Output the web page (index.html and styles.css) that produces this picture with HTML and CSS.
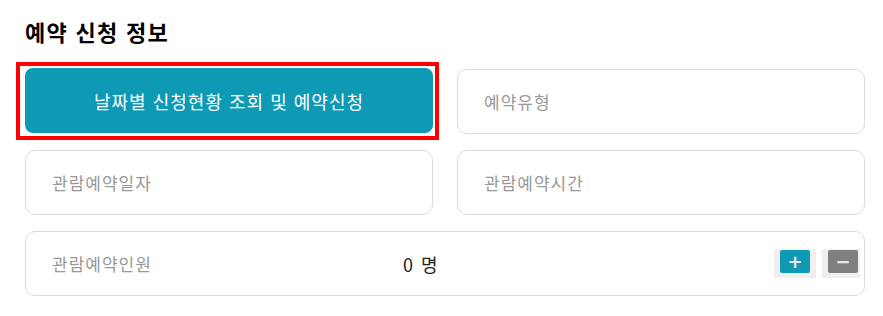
FILE: index.html
```html
<!DOCTYPE html>
<html lang="ko">
<head>
  <meta charset="UTF-8">
  <meta name="viewport" content="width=device-width, initial-scale=1.0">
  <title>예약 신청 정보</title>
  <link rel="stylesheet" href="styles.css">
</head>
<body>

  <div class="reserve">
    <h2 class="reserve-title">예약 신청 정보</h2>

    <div class="reserve-grid">
      <!-- 날짜별 조회 버튼 -->
      <div class="highlight">
        <button class="status-button">날짜별 신청현황 조회 및 예약신청</button>
      </div>
      <div class="field">예약유형</div>
      <div class="field">관람예약일자</div>
      <div class="field">관람예약시간</div>

      <!-- 인원 -->
      <div class="field field-wide">
        <span class="people-label">관람예약인원</span>
        <span class="people-count">0 명</span>
        <div class="counter">
          <button class="counter-btn"><span class="plus">+</span></button>
          <button class="counter-btn last"><span class="minus">−</span></button>
        </div>
      </div>
    </div>
  </div>

</body>
</html>
```

FILE: styles.css
```css
body {
  font-family: "Noto Sans CJK KR", "Noto Sans", sans-serif;
  margin: 0;
  padding: 0;
  background: #fff;
}

.reserve {
  padding: 15px 19px 0 25px;
}

/* 제목 */
.reserve-title {
  font-size: 22px;
  font-weight: bold;
  color: #000;
  letter-spacing: 1.3px;
  margin: 0 0 22px;
  line-height: 32px;
}

.reserve-grid {
  display: grid;
  grid-template-columns: 408px 408px;
  column-gap: 24px;
  row-gap: 16px;
}

/* 빨간 박스 */
.highlight {
  position: relative;
  margin-top: -1px;
}

.highlight::after {
  content: "";
  position: absolute;
  top: -6px;
  left: -9px;
  right: -6px;
  bottom: -6px;
  border: 4px solid #ff0000;
  pointer-events: none;
}

.status-button {
  width: 100%;
  height: 65px;
  border: none;
  border-radius: 8px;
  background: #0e9ab4;
  color: #fff;
  font-family: inherit;
  font-size: 18px;
  letter-spacing: 1px;
  cursor: pointer;
}

/* 입력칸 */
.field {
  height: 63px;
  border: 1px solid #dcdcdc;
  border-radius: 10px;
  display: flex;
  align-items: center;
  padding-left: 26px;
  font-size: 17px;
  letter-spacing: 1px;
  color: #999;
}

.field-wide {
  grid-column: 1 / 3;
  padding-right: 4px;
}

.people-label {
  width: 351px;
}

.people-count {
  color: #222;
  font-size: 18px;
  letter-spacing: 1.5px;
}

.counter {
  margin-left: auto;
  display: flex;
  gap: 6px;
}

.counter-btn {
  background: #efefef;
  border: none;
  padding: 1px 6px 5px;
  margin: 0;
  cursor: pointer;
}

.counter-btn.last {
  padding-right: 2px;
}

.plus, .minus {
  display: block;
  width: 30px;
  height: 23px;
  border-radius: 2px;
  color: #e6e6e6;
  font-family: "DejaVu Sans", sans-serif;
  font-size: 18px;
  font-weight: bold;
  letter-spacing: 0;
  line-height: 23px;
  text-align: center;
}

.plus {
  background: #0e9ab4;
}

.minus {
  background: #7f7f7f;
}
```
